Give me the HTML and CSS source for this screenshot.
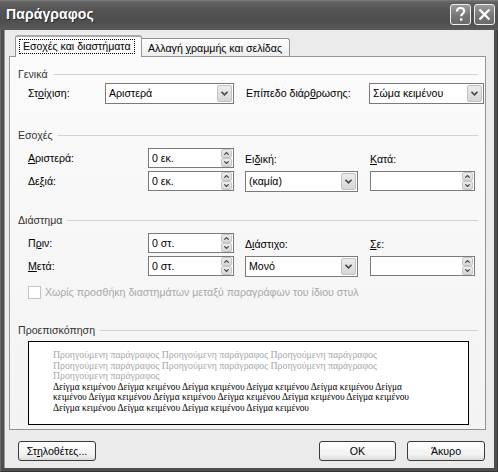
FILE: index.html
```html
<!DOCTYPE html>
<html lang="el">
<head>
<meta charset="utf-8">
<title>Παράγραφος</title>
<link rel="stylesheet" href="styles.css">
</head>
<body>
<div class="window">
  <div class="titlebar">
    <span class="title">Παράγραφος</span>
    <div class="tb-buttons">
      <span class="tb-btn"><svg width="19" height="19" viewBox="0 0 19 19"><path d="M6 6.5 C6 3.8 8 3 9.6 3 C11.6 3 13.2 4.2 13.2 6.2 C13.2 8.4 10.2 8.8 10.2 11.2" fill="none" stroke="#fff" stroke-width="2.2"/><rect x="9" y="13.3" width="2.4" height="2.4" fill="#fff"/></svg></span>
      <span class="tb-btn"><svg width="19" height="19" viewBox="0 0 19 19"><path d="M4.5 4.5 L14.5 14.5 M14.5 4.5 L4.5 14.5" stroke="#fff" stroke-width="2.4"/></svg></span>
    </div>
  </div>
  <div class="client">
    <div class="tabs">
      <div class="tab active"><span class="focus">Εσο<u>χ</u>ές και διαστήματα</span></div>
      <div class="tab">Αλλαγή <u>γ</u>ραμμής και σελίδας</div>
    </div>
    <div class="panel">
      <div class="group-head first"><span>Γενικά</span><i class="line"></i></div>
      <div class="row-general">
        <span class="lbl w-align">Στ<u>ο</u>ίχιση:</span>
        <div class="select s-align"><span class="val">Αριστερά</span><span class="drop"><svg width="7" height="5" viewBox="0 0 7 5"><path d="M0.5 0.8 L3.5 3.8 L6.5 0.8" fill="none" stroke="#4a4a4a" stroke-width="1.6"/></svg></span></div>
        <span class="lbl w-level">Επίπεδο διάρ<u>θ</u>ρωσης:</span>
        <div class="select s-level"><span class="val">Σώμα κειμένου</span><span class="drop"><svg width="7" height="5" viewBox="0 0 7 5"><path d="M0.5 0.8 L3.5 3.8 L6.5 0.8" fill="none" stroke="#4a4a4a" stroke-width="1.6"/></svg></span></div>
      </div>

      <div class="group-head"><span>Εσοχές</span><i class="line"></i></div>
      <div class="grid">
        <span class="lbl c1 r1"><u>Α</u>ριστερά:</span>
        <div class="spin c2 r1"><span class="val">0 εκ.</span><span class="spins"><span class="sb"><svg width="5" height="3" viewBox="0 0 5 3"><path d="M0.3 2.7 L2.5 0.5 L4.7 2.7" fill="none" stroke="#4a4a4a" stroke-width="1.2"/></svg></span><span class="sb"><svg width="5" height="3" viewBox="0 0 5 3"><path d="M0.3 0.3 L2.5 2.5 L4.7 0.3" fill="none" stroke="#4a4a4a" stroke-width="1.2"/></svg></span></span></div>
        <span class="lbl c1 r2">Δε<u>ξ</u>ιά:</span>
        <div class="spin c2 r2"><span class="val">0 εκ.</span><span class="spins"><span class="sb"><svg width="5" height="3" viewBox="0 0 5 3"><path d="M0.3 2.7 L2.5 0.5 L4.7 2.7" fill="none" stroke="#4a4a4a" stroke-width="1.2"/></svg></span><span class="sb"><svg width="5" height="3" viewBox="0 0 5 3"><path d="M0.3 0.3 L2.5 2.5 L4.7 0.3" fill="none" stroke="#4a4a4a" stroke-width="1.2"/></svg></span></span></div>
        <span class="lbl c4 r1 top-lbl">Ει<u>δ</u>ική:</span>
        <div class="select c4 r2"><span class="val">(καμία)</span><span class="drop"><svg width="7" height="5" viewBox="0 0 7 5"><path d="M0.5 0.8 L3.5 3.8 L6.5 0.8" fill="none" stroke="#4a4a4a" stroke-width="1.6"/></svg></span></div>
        <span class="lbl c6 r1 top-lbl"><u>Κ</u>ατά:</span>
        <div class="spin c6 r2"><span class="val"></span><span class="spins"><span class="sb"><svg width="5" height="3" viewBox="0 0 5 3"><path d="M0.3 2.7 L2.5 0.5 L4.7 2.7" fill="none" stroke="#4a4a4a" stroke-width="1.2"/></svg></span><span class="sb"><svg width="5" height="3" viewBox="0 0 5 3"><path d="M0.3 0.3 L2.5 2.5 L4.7 0.3" fill="none" stroke="#4a4a4a" stroke-width="1.2"/></svg></span></span></div>
      </div>

      <div class="group-head spacing-head"><span>Διάστημα</span><i class="line"></i></div>
      <div class="grid">
        <span class="lbl c1 r1">Π<u>ρ</u>ιν:</span>
        <div class="spin c2 r1"><span class="val">0 στ.</span><span class="spins"><span class="sb"><svg width="5" height="3" viewBox="0 0 5 3"><path d="M0.3 2.7 L2.5 0.5 L4.7 2.7" fill="none" stroke="#4a4a4a" stroke-width="1.2"/></svg></span><span class="sb"><svg width="5" height="3" viewBox="0 0 5 3"><path d="M0.3 0.3 L2.5 2.5 L4.7 0.3" fill="none" stroke="#4a4a4a" stroke-width="1.2"/></svg></span></span></div>
        <span class="lbl c1 r2"><u>Μ</u>ετά:</span>
        <div class="spin c2 r2"><span class="val">0 στ.</span><span class="spins"><span class="sb"><svg width="5" height="3" viewBox="0 0 5 3"><path d="M0.3 2.7 L2.5 0.5 L4.7 2.7" fill="none" stroke="#4a4a4a" stroke-width="1.2"/></svg></span><span class="sb"><svg width="5" height="3" viewBox="0 0 5 3"><path d="M0.3 0.3 L2.5 2.5 L4.7 0.3" fill="none" stroke="#4a4a4a" stroke-width="1.2"/></svg></span></span></div>
        <span class="lbl c4 r1 top-lbl">Δ<u>ι</u>άστιχο:</span>
        <div class="select c4 r2"><span class="val">Μονό</span><span class="drop"><svg width="7" height="5" viewBox="0 0 7 5"><path d="M0.5 0.8 L3.5 3.8 L6.5 0.8" fill="none" stroke="#4a4a4a" stroke-width="1.6"/></svg></span></div>
        <span class="lbl c6 r1 top-lbl"><u>Σ</u>ε:</span>
        <div class="spin c6 r2"><span class="val"></span><span class="spins"><span class="sb"><svg width="5" height="3" viewBox="0 0 5 3"><path d="M0.3 2.7 L2.5 0.5 L4.7 2.7" fill="none" stroke="#4a4a4a" stroke-width="1.2"/></svg></span><span class="sb"><svg width="5" height="3" viewBox="0 0 5 3"><path d="M0.3 0.3 L2.5 2.5 L4.7 0.3" fill="none" stroke="#4a4a4a" stroke-width="1.2"/></svg></span></span></div>
      </div>
      <div class="check-row"><span class="checkbox"></span><span class="check-text">Χωρίς προσθήκη διαστημάτων μεταξύ παραγράφων του ίδιου στυλ</span></div>

      <div class="group-head preview-head"><span>Προεπισκόπηση</span><i class="line"></i></div>
      <div class="preview">
        <div class="pl prev">Προηγούμενη παράγραφος Προηγούμενη παράγραφος Προηγούμενη παράγραφος</div>
        <div class="pl prev">Προηγούμενη παράγραφος Προηγούμενη παράγραφος Προηγούμενη παράγραφος</div>
        <div class="pl prev">Προηγούμενη παράγραφος</div>
        <div class="pl cur">Δείγμα κειμένου Δείγμα κειμένου Δείγμα κειμένου Δείγμα κειμένου Δείγμα κειμένου Δείγμα</div>
        <div class="pl cur">κειμένου Δείγμα κειμένου Δείγμα κειμένου Δείγμα κειμένου Δείγμα κειμένου Δείγμα κειμένου</div>
        <div class="pl cur">Δείγμα κειμένου Δείγμα κειμένου Δείγμα κειμένου Δείγμα κειμένου</div>
      </div>
    </div>
    <div class="footer">
      <span class="btn">Στ<u>η</u>λοθέτες...</span>
      <span class="spacer"></span>
      <span class="btn default">OK</span>
      <span class="btn">Άκυρο</span>
    </div>
  </div>
</div>
</body>
</html>
```
FILE: styles.css
```css
* { box-sizing: border-box; }
html, body { margin: 0; padding: 0; }
body {
  width: 498px;
  height: 472px;
  overflow: hidden;
  background: #3c3c3c;
  font-family: "Liberation Sans", Arial, sans-serif;
  font-size: 10.6px;
  line-height: 13px;
  color: #000;
}
u { text-decoration: underline; text-underline-offset: 1px; }

.window {
  width: 498px;
  height: 472px;
  display: flex;
  flex-direction: column;
  background: #4e4e4e;
  border-left: 1px solid #6a6a6a;
  border-right: 1px solid #3a3a3a;
  border-bottom: 1px solid #333;
}
.titlebar {
  height: 30px;
  flex: none;
  display: flex;
  align-items: center;
  justify-content: space-between;
  padding: 0 3px 1px 6px;
  margin: 0 -1px;
  background: linear-gradient(to bottom, #808080 0, #626262 2px, #545454 35%, #4e4e4e 70%, #5a5a5a 100%);
}
.title {
  color: #fff;
  font-weight: bold;
  font-size: 14px;
  letter-spacing: 0.1px;
  text-shadow: 1px 1px 0 #2a2a2a;
}
.tb-buttons { display: flex; gap: 3px; }
.tb-btn {
  width: 21px;
  height: 21px;
  border: 1px solid #f0f0f0;
  border-radius: 3px;
  background: linear-gradient(to bottom, #9a9a9a, #747474 60%, #6a6a6a);
  display: flex;
  align-items: center;
  justify-content: center;
}

.client {
  flex: 1;
  margin: 0 3px 3px;
  background: #ebebeb;
  padding: 5px 0 0 4px;
  display: flex;
  flex-direction: column;
  border-left: 1px solid #9a9a9a;
}

.tabs {
  display: flex;
  align-items: flex-end;
  height: 22px;
  margin-left: 6px;
  margin-bottom: -1px;
  position: relative;
  z-index: 1;
}
.tab {
  height: 18px;
  margin-bottom: 1px;
  width: 148px;
  border: 1px solid #949494;
  border-bottom: none;
  border-left: none;
  border-radius: 0 3px 0 0;
  background: linear-gradient(to bottom, #ffffff, #ececec);
  padding: 3px 0 0 6px;
  white-space: nowrap;
}
.tab.active {
  height: 22px;
  margin-bottom: 0;
  width: 127px;
  border-left: 1px solid #949494;
  border-top: 2px solid #a8a8a8;
  border-radius: 3px 3px 0 0;
  background: #fbfbfb;
  padding: 3px 0 0 4px;
}
.focus {
  display: inline-block;
  outline: 1px dotted #000;
  padding: 0 3px 0 3px;
}

.panel {
  width: 477px;
  height: 374px;
  border: 1px solid #949494;
  background: linear-gradient(to bottom, #fbfbfb, #f3f3f3);
  padding: 0 0 0 8px;
}

.group-head {
  display: flex;
  align-items: center;
  gap: 5px;
  height: 14px;
  margin-top: 24px;
  padding-right: 7px;
  color: #333;
}
.group-head.first { margin-top: 10px; }
.group-head.spacing-head { margin-top: 21px; }
.group-head.preview-head { margin-top: 24px; }
.group-head .line { flex: 1; height: 1px; background: #d2d2d2; }

.lbl { white-space: nowrap; }

.row-general {
  display: flex;
  align-items: center;
  padding-left: 10px;
  height: 22px;
  margin-top: 1px;
}
.w-align { width: 77px; }
.w-level { width: 123px; margin-left: 12px; }
.s-align { width: 129px; }
.s-level { width: 115px; }

.select, .spin {
  height: 21px;
  border: 1px solid #7a7a7a;
  background: #fff;
  display: flex;
  align-items: center;
  padding-left: 3px;
}
.spin { height: 20px; }
.val { flex: 1; white-space: nowrap; }
.drop {
  width: 15px;
  height: 17px;
  margin-right: 1px;
  border: 1px solid #c2c2c2;
  border-radius: 2px;
  background: linear-gradient(to bottom, #ececec, #d6d6d6);
  display: flex;
  align-items: center;
  justify-content: center;
}
.spins {
  width: 11px;
  height: 18px;
  margin-right: 1px;
  display: flex;
  flex-direction: column;
  gap: 0;
}
.sb {
  flex: 1;
  border: 1px solid #c6c6c6;
  border-radius: 2px;
  background: linear-gradient(to bottom, #ececec, #d6d6d6);
  display: flex;
  align-items: center;
  justify-content: center;
}

.grid {
  display: grid;
  grid-template-columns: 120px 86px 11px 113px 12px 105px;
  grid-template-rows: 20px 21px;
  row-gap: 3px;
  padding-left: 10px;
  margin-top: 6px;
}
.grid .lbl { align-self: center; }
.c1 { grid-column: 1; }
.c2 { grid-column: 2; }
.c4 { grid-column: 4; }
.c6 { grid-column: 6; }
.r1 { grid-row: 1; }
.r2 { grid-row: 2; }
.grid .top-lbl { align-self: end; margin-bottom: 2px; }

.check-row {
  display: flex;
  align-items: center;
  gap: 4px;
  padding-left: 10px;
  margin-top: 8px;
  height: 14px;
}
.checkbox {
  width: 13px;
  height: 13px;
  border: 1px solid #c4c4c4;
  background: #fff;
}
.check-text { color: #a8a8a8; white-space: nowrap; }

.preview {
  margin: 4px 0 0 10px;
  width: 441px;
  height: 84px;
  border: 1px solid #000;
  background: #fff;
  padding: 8px 0 0 24px;
  font-family: "Liberation Serif", "Times New Roman", serif;
  line-height: 10.5px;
}
.pl { white-space: nowrap; }
.prev { color: #a8a8a8; font-size: 9.8px; }
.cur { color: #000; font-size: 9.4px; }

.footer {
  display: flex;
  align-items: center;
  margin-top: 11px;
  padding: 0 9px 0 9px;
  gap: 11px;
}
.spacer { flex: 1; }
.btn {
  width: 77px;
  height: 20px;
  border: 1px solid #3a3a3a;
  border-radius: 3px;
  background: linear-gradient(to bottom, #ffffff, #f2f2f2 70%, #dcdcdc);
  display: flex;
  align-items: center;
  justify-content: center;
  white-space: nowrap;
}
.btn:first-child { width: 78px; }
.btn:last-child { width: 78px; }
```
